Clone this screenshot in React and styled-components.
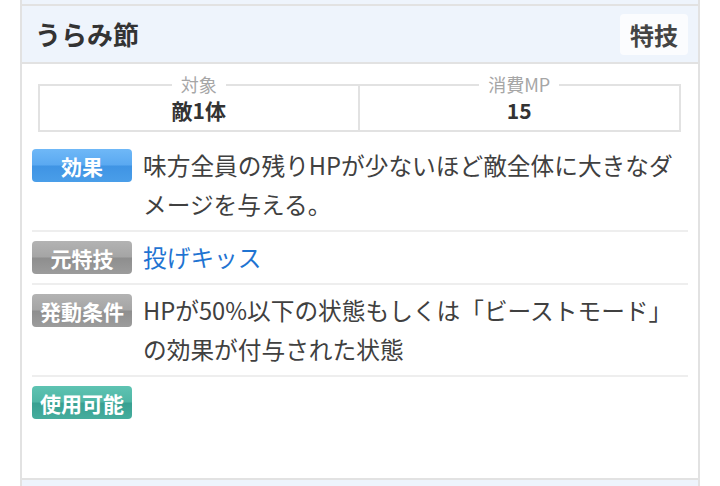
import styled, { createGlobalStyle, css } from 'styled-components';

const GlobalStyle = createGlobalStyle`
	body {
		margin: 0;
		background: #ffffff;
		font-family: "Noto Sans CJK JP", "Noto Sans", sans-serif;
		color: #3c3c3c;
	}
`;

const Panel = styled.div`
	margin: 0 20px;
	border-left: 2px solid #e2e2e2;
	border-right: 2px solid #e2e2e2;
	padding-top: 4px;
	height: 486px;
	overflow: hidden;
	display: flex;
	flex-direction: column;
	background: #eef4fc;
`;

const Header = styled.div`
	display: flex;
	align-items: center;
	justify-content: space-between;
	height: 56px;
	padding: 0 10px 0 13px;
	background: #eef4fc;
	border-top: 2px solid #e2e2e2;
	border-bottom: 2px solid #e2e2e2;
`;

const Title = styled.h2`
	margin: 0;
	font-size: 26px;
	font-weight: 700;
	color: #333333;
	line-height: 1;
`;

const Kind = styled.span`
	display: flex;
	align-items: center;
	justify-content: center;
	width: 68px;
	height: 41px;
	border-radius: 4px;
	background: #fbfcfe;
	font-size: 24px;
	font-weight: 700;
	color: #444444;
`;

const Body = styled.div`
	height: 414px;
	padding: 0 10px;
	background: #ffffff;
	border-bottom: 2px solid #e2e2e2;
`;

const Stats = styled.div`
	display: grid;
	grid-template-columns: 1fr 1fr;
	margin: 11px 7px 8px 6px;
`;

const StatCell = styled.fieldset`
	margin: 0;
	padding: 0 0 9px;
	border: 2px solid #e2e2e2;
	text-align: center;
	min-width: 0;
	& + & {
		border-left: none;
	}
`;

const StatLabel = styled.legend`
	margin: 0 auto;
	padding: 0 9px;
	font-size: 18px;
	line-height: 19px;
	color: #a6a6a6;
`;

const StatValue = styled.div`
	margin-top: 5px;
	font-size: 21px;
	font-weight: 700;
	line-height: 22px;
	color: #333333;
`;

const Row = styled.div`
	display: flex;
	align-items: flex-start;
	gap: 11px;
	padding: 6px 0 6px;
	& + & {
		border-top: 2px solid #eeeeee;
	}
`;

const badgeColors = {
	blue: css`
		background: linear-gradient(#6fb8f7 0%, #5aa9f1 48%, #3f94e4 52%, #4a9ee9 100%);
	`,
	gray: css`
		background: linear-gradient(#b3b3b3 0%, #a5a5a5 48%, #8e8e8e 52%, #9c9c9c 100%);
	`,
	teal: css`
		background: linear-gradient(#5ec3b2 0%, #4fb6a5 48%, #38a091 52%, #45ad9d 100%);
	`,
};

const Badge = styled.span`
	flex: none;
	display: flex;
	align-items: center;
	justify-content: center;
	width: 100px;
	height: 33px;
	margin-top: 3px;
	border-radius: 4px;
	font-size: 21px;
	font-weight: 700;
	color: #ffffff;
	white-space: nowrap;
	${({ $tone }) => badgeColors[$tone]}
`;

const Text = styled.div`
	flex: 1;
	font-size: 23.7px;
	line-height: 39px;
	color: #404040;
`;

const SkillLink = styled.a`
	color: #1f74d2;
	text-decoration: none;
`;

const stats = [
	{ label: '対象', value: '敵1体' },
	{ label: '消費MP', value: '15' },
];

export default function App() {
	return (
		<>
			<GlobalStyle />
			<Panel>
				<Header>
					<Title>うらみ節</Title>
					<Kind>特技</Kind>
				</Header>
				<Body>
					<Stats>
						{stats.map(({ label, value }) => (
							<StatCell key={label}>
								<StatLabel>{label}</StatLabel>
								<StatValue>{value}</StatValue>
							</StatCell>
						))}
					</Stats>
					<Row>
						<Badge $tone="blue">効果</Badge>
						<Text>
							味方全員の残りHPが少ないほど敵全体に大きなダメージを与える。
						</Text>
					</Row>
					<Row>
						<Badge $tone="gray">元特技</Badge>
						<Text>
							<SkillLink href="#">投げキッス</SkillLink>
						</Text>
					</Row>
					<Row>
						<Badge $tone="gray">発動条件</Badge>
						<Text>
							HPが50%以下の状態もしくは「ビーストモード」の効果が付与された状態
						</Text>
					</Row>
					<Row>
						<Badge $tone="teal">使用可能</Badge>
					</Row>
				</Body>
			</Panel>
		</>
	);
}
